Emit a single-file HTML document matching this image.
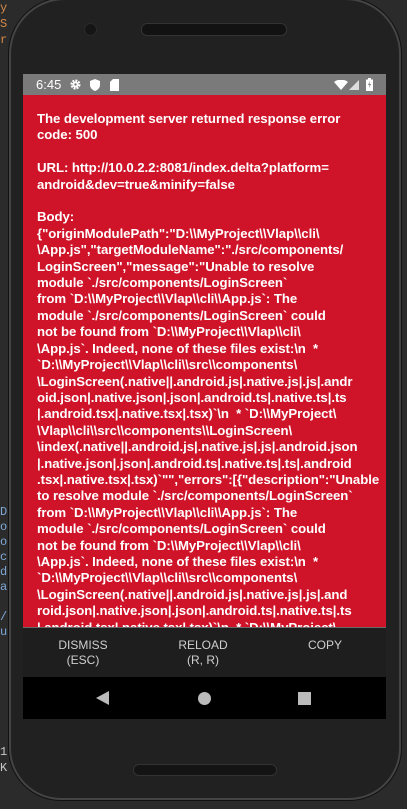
<!DOCTYPE html>
<html><head><meta charset="utf-8"><style>
html,body{margin:0;padding:0;width:407px;height:809px;overflow:hidden;background:#2b2b2b;font-family:"Liberation Sans",Roboto,sans-serif}
.phone{position:absolute;left:9px;top:-2px;width:392px;height:802px;background:#212121;border-radius:56px 56px 52px 52px;box-shadow:0 0 0 2px #444 inset,0 0 0 1px #111}
.speaker{position:absolute;left:132px;top:25px;width:144px;height:11px;border-radius:6px;background:#121212;border:1px solid #333}
.cam{position:absolute;left:75px;top:25px;width:11px;height:11px;border-radius:50%;background:#151515;border:1px solid #2a2a2a}
.screen{position:absolute;left:23px;top:74px;width:363px;height:645px;background:#000;overflow:hidden}
.status{position:absolute;left:0;top:0;width:363px;height:21px;background:#7a7a7a;color:#fff;font-size:13px}
.red{position:absolute;left:0;top:21px;width:363px;height:532px;background:#cf1429;overflow:hidden}
.txt{position:absolute;left:14px;top:16px;color:#fff;font-weight:bold;font-size:13.2px;line-height:16.4px;white-space:pre;letter-spacing:-0.05px}
.bar{position:absolute;left:0;top:553px;width:363px;height:49px;background:#1e1e1e;border-top:1px solid #6a6a6a}
.btn{position:absolute;top:10px;color:#cfcfcf;font-size:12px;text-align:center;line-height:15px}
.nav{position:absolute;left:0;top:603px;width:363px;height:42px;background:#000}
</style></head><body>
<div style="position:absolute;left:0;top:0;color:#d58a4a;font-size:12px;line-height:16px;font-family:'Liberation Mono',monospace">y<br>S<br>r</div>
<div style="position:absolute;left:0;top:505px;color:#7fa8d8;font-size:12px;line-height:15px;font-family:'Liberation Mono',monospace">D<br>o<br>o<br>c<br>d<br>a<br><br>/<br>u</div>
<div style="position:absolute;left:0;top:744px;color:#c8c8c8;font-size:12px;line-height:16px;font-family:'Liberation Mono',monospace">1<br>K</div>
<div class="phone">
<div class="cam"></div><div class="speaker"></div>
</div>
<div style="position:absolute;left:133px;top:764px;width:142px;height:10px;border-radius:6px;background:#141414;border:1px solid #333"></div>
<div class="screen">
 <div class="status">
  <span style="position:absolute;left:13px;top:3px">6:45</span>
  <svg style="position:absolute;left:47px;top:5px" width="11" height="11" viewBox="0 0 12 12"><circle cx="6" cy="6" r="4" fill="none" stroke="#fff" stroke-width="3" stroke-dasharray="2 1.1"/><circle cx="6" cy="6" r="3.2" fill="#fff"/><circle cx="6" cy="6" r="1.3" fill="#7a7a7a"/></svg>
  <svg style="position:absolute;left:67px;top:5px" width="10" height="12" viewBox="0 0 10 12"><path d="M5 0L10 2V6C10 9 7.5 11 5 12C2.5 11 0 9 0 6V2Z" fill="#fff"/></svg>
  <svg style="position:absolute;left:87px;top:5px" width="9" height="12" viewBox="0 0 9 12"><path d="M3 0H9V12H0V3Z" fill="#fff"/></svg>
  <svg style="position:absolute;left:311px;top:6px" width="14" height="10" viewBox="0 0 14 10"><path d="M0 2Q7-3 14 2L7 10Z" fill="#fff"/></svg>
  <svg style="position:absolute;left:326px;top:6px" width="10" height="10" viewBox="0 0 10 10"><path d="M10 0V10H0Z" fill="#ddd"/></svg>
  <svg style="position:absolute;left:343px;top:4px" width="7" height="13" viewBox="0 0 7 13"><rect x="2" y="0" width="3" height="2" fill="#fff"/><rect x="0" y="1.5" width="7" height="11.5" fill="#fff"/><path d="M4 3L2 7H3.5L3 10L5 6H3.5Z" fill="#7a7a7a"/></svg>
 </div>
 <div class="red"><div class="txt">The development server returned response error
code: 500

URL: http://10.0.2.2:8081/index.delta?platform=
android&amp;dev=true&amp;minify=false

Body:
{"originModulePath":"D:\\MyProject\\Vlap\\cli\
\App.js","targetModuleName":"./src/components/
LoginScreen","message":"Unable to resolve
module `./src/components/LoginScreen`
from `D:\\MyProject\\Vlap\\cli\\App.js`: The
module `./src/components/LoginScreen` could
not be found from `D:\\MyProject\\Vlap\\cli\
\App.js`. Indeed, none of these files exist:\n  *
`D:\\MyProject\\Vlap\\cli\\src\\components\
\LoginScreen(.native||.android.js|.native.js|.js|.andr
oid.json|.native.json|.json|.android.ts|.native.ts|.ts
|.android.tsx|.native.tsx|.tsx)`\n  * `D:\\MyProject\
\Vlap\\cli\\src\\components\\LoginScreen\
\index(.native||.android.js|.native.js|.js|.android.json
|.native.json|.json|.android.ts|.native.ts|.ts|.android
.tsx|.native.tsx|.tsx)`"","errors":[{"description":"Unable
to resolve module `./src/components/LoginScreen`
from `D:\\MyProject\\Vlap\\cli\\App.js`: The
module `./src/components/LoginScreen` could
not be found from `D:\\MyProject\\Vlap\\cli\
\App.js`. Indeed, none of these files exist:\n  *
`D:\\MyProject\\Vlap\\cli\\src\\components\
\LoginScreen(.native||.android.js|.native.js|.js|.and
roid.json|.native.json|.json|.android.ts|.native.ts|.ts
|.android.tsx|.native.tsx|.tsx)`\n  * `D:\\MyProject\</div></div>
 <div class="bar">
  <div class="btn" style="left:30px;width:60px">DISMISS<br>(ESC)</div>
  <div class="btn" style="left:150px;width:60px">RELOAD<br>(R, R)</div>
  <div class="btn" style="left:272px;width:60px">COPY</div>
 </div>
 <div class="nav">
  <svg style="position:absolute;left:73px;top:14px" width="13" height="14" viewBox="0 0 13 14"><path d="M13 0V14L0 7Z" fill="#bbb"/></svg>
  <div style="position:absolute;left:175px;top:15px;width:13px;height:13px;border-radius:50%;background:#bbb"></div>
  <div style="position:absolute;left:275px;top:15px;width:13px;height:13px;background:#bbb"></div>
 </div>
</div>
</body></html>
